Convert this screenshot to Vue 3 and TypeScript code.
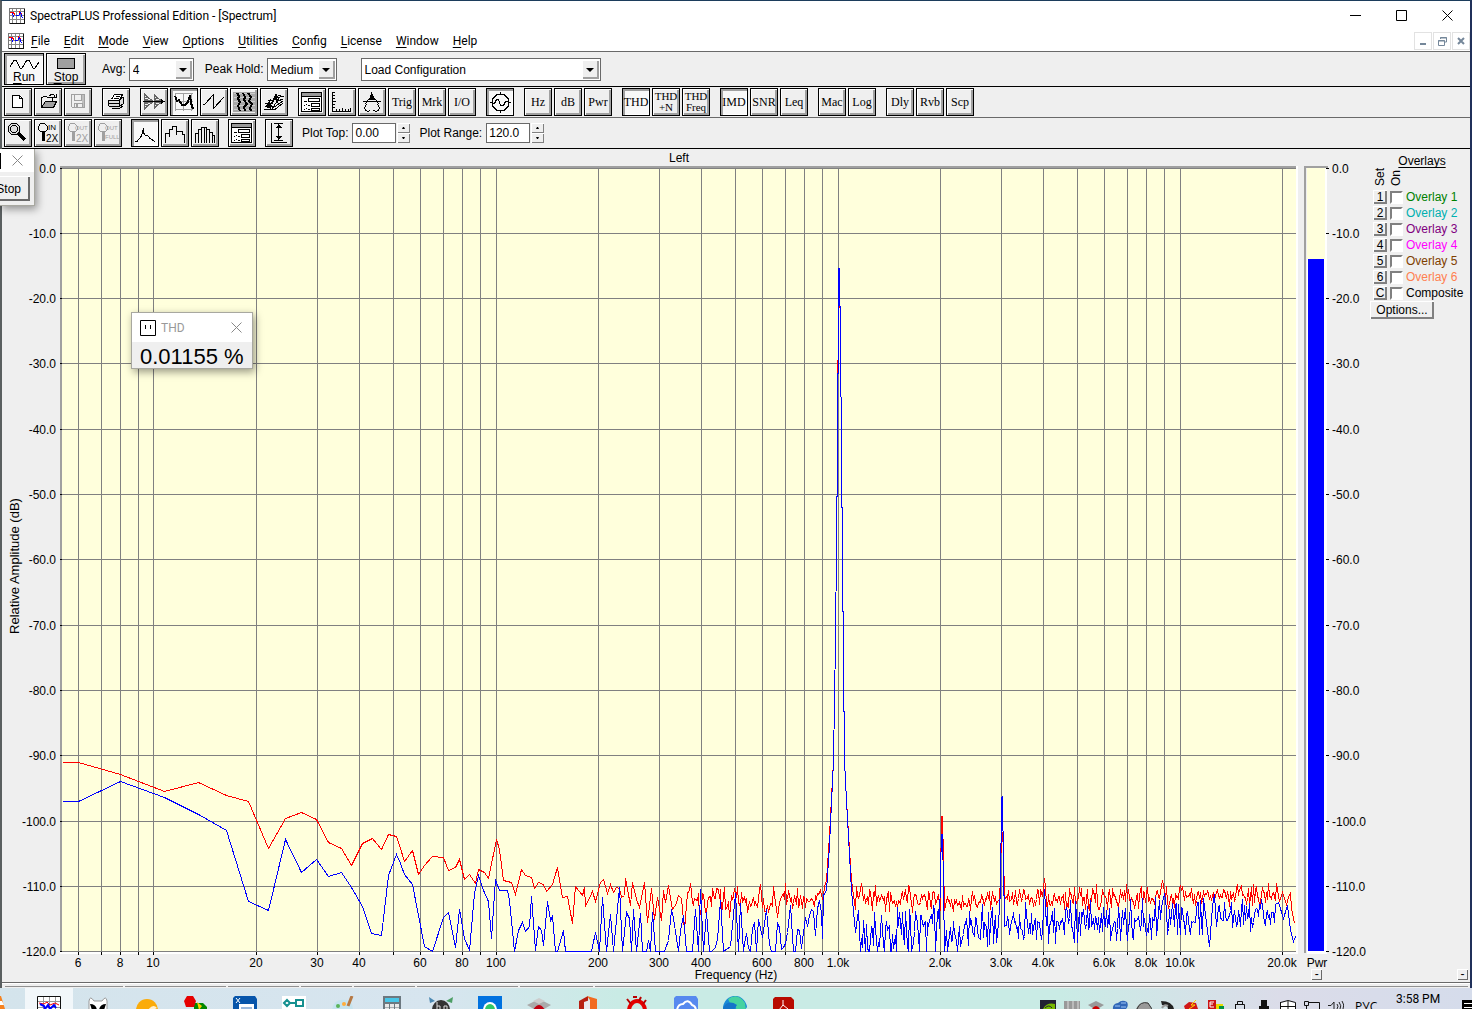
<script setup lang="ts">
import { ref } from 'vue'

interface Shape { d?: string; fill?: string; stroke?: string; w?: number; t?: string; x?: number; y?: number; size?: number }
interface Tool { name: string; lines?: string[]; icon?: string; on?: boolean }

const G = '#a0a0a0'
const s = (d: string, stroke = '#000', w = 1): Shape => ({ d, stroke, w })
const f = (d: string, fill = '#000'): Shape => ({ d, fill })
const t = (text: string, x: number, y: number, size: number, fill = '#000'): Shape => ({ t: text, x, y, size, fill })

const dialogShapes: Shape[] = [
  f('M2 3H24V23H2Z', '#fff'), s('M2.5 3.5H22.5V22.5H2.5Z'), f('M3 4H22V7H3Z', '#999'), s('M2.5 7.5H22.5'),
  s('M9.5 9.5H20.5V12.5H9.5ZM12.5 14.5H20.5V17.5H12.5ZM12.5 19.5H20.5V21H12.5Z'), s('M5 12.5H8M5 16.5H6M7 15.5H8M9 16.5H11M5 20.5H6M7 19.5H8M9 20.5H11'),
]

const icons: Record<string, Shape[]> = {
  new: [f('M7 6H15L18 9V19H7Z', '#fff'), s('M7.5 6.5H14.5L17.5 9.5V18.5H7.5ZM14.5 6.5V9.5H17.5')],
  open: [s('M6.5 17.5V8.5H7.5L8.5 7.5H11.5L12.5 8.5H17.5V11.5'), f('M6 18.5L10 12H22L18 18.5Z', G), s('M6.5 18.5L10.5 12.5H21.5L18.5 18.5ZM14.5 6.5L16.5 5.5H18.5L20.5 8.5M17 8.5H21.5M21.5 5V9')],
  save: [f('M17 6H20V19H17Z', '#c0c0c0'), s('M6.5 5.5H19.5V18.5H7.5L6.5 17.5ZM9.5 5.5V11.5H16.5V5.5M9.5 18.5V14.5H17.5V18.5', G), f('M11 15H13V18H11Z', G)],
  print: [f('M10 5H20L17 12H7Z', '#fff'), f('M5 11H16L20 8V15L16 19H8L5 17Z', '#ddd'), s('M8.5 10.5L11.5 5.5H19.5L16.5 11.5M12.5 7.5H17M11 9.5H16'), s('M5.5 11.5H16.5V17.5H6.5L5.5 16.5ZM16.5 11.5L19.5 8.5H20.5V14.5L16.5 17.5M5.5 14.5H16.5M8.5 19.5H16.5L20.5 16.5')],
  wave: [f('M3 4L13 12.5L3 21Z', '#666'), f('M13 5L22 12.5L13 20Z', '#666'), s('M4 7.5H5M4 9.5H7M4 15.5H7M4 17.5H5M7 10.5H9M7 14.5H9M14 8.5H15M14 16.5H15M15 10.5H18M15 14.5H18', '#efefef'), s('M2 12.5H24'), f('M20 10L23 12.5L20 15Z')],
  spectrum: [s('M4.5 4V22M12.5 4V22M20.5 4V22M4 4.5H22M4 12.5H22M4 20.5H22', G), s('M4 7L6 12L8 11L11 16H14L17 13L19 6L20 14L22 20', '#000', 2)],
  saw: [s('M2 15.5H3.5L12.5 5.5V19.5L22.5 8.5')],
  gram: [f('M2 3H24V23H2Z', '#a8a8a8'), s('M3 4H24M3 8H24M3 12H24M3 16H24M3 20H24', '#ccc'), s('M6 4L8 7L7 10L9 13L7 17L9 22M12 4L14 8L13 11L16 15L13 18L14 22M17 4L20 8L18 12L21 15L19 19L20 22', '#000', 2)],
  surface: [s('M3 20.5H14L22 14M4 17.5H14L22 12M4 14.5H11L15 8L17 12L22 10M7 11.5H12L15 5L16 9L23 7M14 8L20 6M6 17L10 10M8 19L14 8M11 20L18 9'), f('M4 18L8 12L11 17L10 20Z'), f('M14 10L16 5L17 15Z')],
  dialog: dialogShapes,
  ruler: [s('M3.5 3V22.5H22M3 3.5H6M4 6.5H6M4 9.5H6M3 12.5H7M4 15.5H6M4 18.5H6M7.5 20V22M10.5 20V22M13.5 19V22M16.5 20V22M19.5 20V22M21.5 19V22')],
  caliper: [s('M12.5 3V7L6 15M13.5 7L20 15M4 12.5H22M7.5 15C5 18 5 21 9 22.5L11.5 21.5M18.5 15C21 18 21 21 17 22.5L14.5 21.5'), f('M12 5H14L16 11H10Z')],
  gen: [s('M13.5 3V5M13.5 22V24M3 13.5H5M22 13.5H24M10 5.5H17L21.5 10V17L17 21.5H10L5.5 17V10ZM6 14.5H7.5L9.5 10.5H11.5L13.5 16.5H16.5L18.5 12.5H21')],
  zoom: [f('M5 3H12L15 6V11L12 14H6L3 11V6Z', '#ddd'), s('M6.5 3.5H11.5L14.5 6.5V11.5L11.5 14.5H6.5L3.5 11.5V6.5ZM7.5 5.5H10.5L12.5 7.5V10.5L10.5 12.5H7.5L5.5 10.5V7.5Z'), s('M13 13L20 20', '#000', 3)],
  in2: [s('M5.5 3.5H9.5L12.5 6.5V9.5L10.5 11.5H5.5L3.5 9.5V6.5Z'), s('M8 11V21', '#000', 3), t('IN', 13, 10, 8), t('2X', 11, 22, 10)],
  out2: [s('M5.5 3.5H9.5L12.5 6.5V9.5L10.5 11.5H5.5L3.5 9.5V6.5Z', G), s('M8 11V21', G, 3), t('OUT', 10, 10, 6, G), t('2X', 11, 22, 10, G)],
  outf: [s('M5.5 3.5H9.5L12.5 6.5V9.5L10.5 11.5H5.5L3.5 9.5V6.5Z', G), s('M8 11V21', G, 3), t('OUT', 10, 10, 6, G), t('FULL', 10, 19, 6, G)],
  line: [s('M3 21.5H5L9.5 16L11.5 8V13L13.5 15.5H15.5L18 18.5L23 21.5')],
  bars: [s('M3.5 23V13.5H7.5V9.5H10.5V6.5H14.5V11.5H20.5V14.5H22.5V23M7.5 13V17M14.5 11V15')],
  cols: [s('M3.5 23V13.5H6.5V9.5H9.5V7.5H14.5V9.5H17.5V12.5H20.5V15.5H22.5V23M6.5 12V23M9.5 9V23M12.5 7V23M14.5 9V23M17.5 12V23M20.5 15V23')],
  range: [s('M5.5 3V22.5H21M8 3.5H17M8 20.5H17M12.5 4V20M10.5 6.5H14.5M9.5 7.5H15.5M10.5 17.5H14.5M9.5 16.5H15.5M11.5 5.5H13.5M11.5 18.5H13.5')],
}

const word = (name: string, on = false): Tool => ({ name, lines: name.split(' '), on })
const pic = (name: string, icon: string, on = false): Tool => ({ name, icon, on })

const mainTools: Tool[][] = [
  [pic('New', 'new'), pic('Open', 'open'), pic('Save', 'save')],
  [pic('Print', 'print')],
  [pic('Time Series', 'wave'), pic('Spectrum', 'spectrum', true), pic('Phase', 'saw'), pic('Spectrogram', 'gram'), pic('Surface', 'surface')],
  [pic('Settings', 'dialog'), pic('Scaling', 'ruler'), pic('Calibration', 'caliper'), word('Trig'), word('Mrk'), word('I/O')],
  [pic('Signal Generator', 'gen', true)],
  [word('Hz'), word('dB'), word('Pwr')],
  [word('THD', true), word('THD +N'), word('THD Freq')],
  [word('IMD', true), word('SNR'), word('Leq')],
  [word('Mac'), word('Log')],
  [word('Dly'), word('Rvb'), word('Scp')],
]
const plotTools: Tool[][] = [
  [pic('Zoom', 'zoom'), pic('Zoom In 2X', 'in2'), pic('Zoom Out 2X', 'out2'), pic('Zoom Out Full', 'outf')],
  [pic('Line Plot', 'line', true), pic('Bar Plot', 'bars'), pic('Column Plot', 'cols')],
  [pic('Plot Options', 'dialog')],
  [pic('Autoscale', 'range')],
]

const menus = ['File', 'Edit', 'Mode', 'View', 'Options', 'Utilities', 'Config', 'License', 'Window', 'Help']
const avg = ref('4')
const hold = ref('Medium')
const config = ref('Load Configuration')
const plotTop = ref('0.00')
const plotRange = ref('120.0')

const overlays = [
  { key: '1', label: 'Overlay 1', color: '#008000' },
  { key: '2', label: 'Overlay 2', color: '#00b0b0' },
  { key: '3', label: 'Overlay 3', color: '#800080' },
  { key: '4', label: 'Overlay 4', color: '#ff00ff' },
  { key: '5', label: 'Overlay 5', color: '#804000' },
  { key: '6', label: 'Overlay 6', color: '#ff8050' },
  { key: 'C', label: 'Composite', color: '#000000' },
]

// Frequency grid: position on the axis and the printed label, if any.
const freqGrid: [number, string][] = [
  [78, '6'], [101, ''], [120, '8'], [138, ''], [153, '10'], [256, '20'], [317, '30'], [359, '40'], [393, ''], [420, '60'],
  [443, ''], [462, '80'], [480, ''], [496, '100'], [598, '200'], [659, '300'], [701, '400'], [735, ''], [762, '600'], [785, ''],
  [804, '800'], [822, ''], [838, '1.0k'], [940, '2.0k'], [1001, '3.0k'], [1043, '4.0k'], [1077, ''], [1104, '6.0k'], [1127, ''],
  [1146, '8.0k'], [1164, ''], [1180, '10.0k'], [1282, '20.0k'],
]
const dbGrid = [168, 233, 298, 363, 429, 494, 559, 625, 690, 755, 821, 886, 951].map((y, i) => ({
  y,
  label: i === 0 ? '0.0' : `-${i * 10}.0`,
}))

let seed = 20
function rnd(): number {
  seed = (seed * 1103515245 + 12345) % 2147483648
  return seed / 2147483648
}
type Pt = [number, number]
// Noise floor between two x positions around a sloping centre level.
function noise(x0: number, x1: number, c0: number, c1: number, amp: number, spike: number, step: number): Pt[] {
  const out: Pt[] = []
  for (let x = x0; x < x1; x += step) {
    const c = c0 + ((c1 - c0) * (x - x0)) / (x1 - x0)
    let y = c + (rnd() + rnd() - 1) * amp * 1.4
    const r = rnd()
    if (r < 0.08) y = c - spike * (0.6 + rnd() * 0.4)
    else if (r > 0.93) y = c + spike * 0.8
    out.push([Math.round(x), Math.min(951, Math.round(y))])
  }
  return out
}
const toPath = (p: Pt[]): string => 'M' + p.map(([x, y]) => `${x + 0.5} ${y + 0.5}`).join('L')

const redPath = toPath([
  [62, 762], [78, 762], [120, 774], [164, 791], [198, 782], [226, 795], [248, 801], [268, 848], [285, 818], [301, 812], [316, 819],
  [328, 842], [341, 848], [351, 865], [362, 843], [372, 838], [381, 849], [388, 834], [396, 836], [400, 848], [404, 861], [412, 850],
  [418, 874], [424, 865], [432, 856], [443, 857], [448, 870], [455, 867], [459, 859], [464, 879], [469, 874], [475, 883], [478, 869],
  [484, 872], [488, 878], [496, 839], [499, 849], [503, 880], [511, 882], [515, 894], [521, 869], [525, 875], [531, 877], [534, 888],
  [538, 882], [543, 884], [546, 891], [552, 884], [557, 867], [562, 897], [567, 896], [572, 923], [575, 886], [582, 895], [584, 887],
  [585, 906], [592, 891], [595, 901], [600, 882], [603, 879], [607, 893], [610, 884], [613, 892], [616, 887], [619, 888], [621, 897],
  [624, 895], [625, 878], [630, 905], [632, 882], [636, 899], [639, 907], [644, 882], [647, 922], [651, 888], [654, 919], [657, 897],
  [661, 920], [663, 890], [665, 902], [668, 885], [672, 909], [676, 903], [678, 895], [681, 898], [684, 930], [687, 892],
  ...noise(689, 786, 901, 901, 11, 20, 1.3), ...noise(786, 824, 899, 895, 8, 13, 1.2),
  [824, 886], [826, 880], [829, 835], [833, 760], [835, 640], [837, 450], [838, 275], [839, 272], [840, 340], [842, 560], [844, 760],
  [846, 800], [849, 850], [851, 880], [853, 895],
  ...noise(855, 940, 897, 902, 9, 15, 1.1), [940, 880], [941, 816], [942, 816], [943, 860], [944, 910],
  ...noise(946, 1000, 902, 899, 7, 12, 1), [1000, 875], [1001, 832], [1002, 832], [1003, 850], [1004, 900],
  ...noise(1005, 1043, 899, 897, 7, 9, 1), [1043, 888], [1044, 878], [1045, 886],
  ...noise(1046, 1160, 898, 897, 8, 14, 1), [1162, 880], [1164, 891], ...noise(1165, 1280, 897, 894, 7, 13, 1),
  [1282, 892], [1286, 904], [1288, 897], [1290, 892], [1291, 908], [1294, 923],
])
const bluePath = toPath([
  [62, 801], [78, 801], [120, 781], [164, 797], [198, 814], [226, 830], [248, 901], [268, 910], [285, 839], [301, 872], [316, 859],
  [328, 876], [341, 872], [351, 887], [362, 906], [371, 933], [381, 935], [388, 875], [396, 854], [400, 863], [404, 874], [412, 884],
  [418, 915], [424, 946], [432, 951], [443, 917], [448, 912], [455, 947], [459, 909], [464, 938], [469, 950], [474, 893], [478, 875],
  [483, 890], [488, 901], [491, 938], [495, 879], [499, 890], [507, 890], [509, 900], [514, 951], [518, 930], [522, 922], [525, 931],
  [529, 926], [531, 896], [535, 950], [538, 926], [541, 930], [543, 945], [547, 901], [550, 920], [552, 916], [555, 951], [557, 951],
  [563, 930], [565, 951], [591, 951], [595, 932], [599, 951], [602, 897], [606, 951], [610, 914], [613, 951], [619, 887], [622, 951],
  [626, 912], [629, 918], [631, 951], [633, 909], [636, 951], [640, 913], [642, 951], [646, 951], [648, 940], [650, 951], [652, 912],
  [655, 951], [664, 951], [668, 940], [671, 909], [673, 918], [678, 951], [680, 930], [683, 915], [686, 951], [692, 951], [695, 909],
  [698, 951], [700, 889], [703, 951], [706, 912], [709, 951],
  ...noise(711, 718, 945, 945, 10, 8, 2), [720, 900], [723, 951], [730, 946], [735, 893], [738, 951], [740, 903], [743, 951],
  ...noise(744, 764, 945, 935, 24, 20, 2), [766, 909], [769, 944], ...noise(771, 789, 945, 945, 20, 20, 2), [790, 905], [793, 951],
  ...noise(795, 822, 938, 916, 18, 18, 2), [822, 938],
  [823, 895], [826, 890], [829, 845], [833, 760], [835, 640], [837, 450], [838, 300], [838, 268], [839, 268], [840, 340], [842, 560],
  [844, 760], [846, 800], [849, 855], [851, 890], [855, 932], [858, 910], [860, 951],
  ...noise(861, 940, 938, 930, 23, 28, 1.2), [940, 870], [941, 834], [942, 834], [943, 885], [944, 951],
  ...noise(946, 1000, 938, 922, 17, 24, 1.2), [1000, 890], [1001, 798], [1002, 796], [1003, 862], [1004, 926],
  ...noise(1005, 1043, 922, 923, 16, 20, 1.1), [1044, 889], [1046, 925],
  ...noise(1047, 1162, 924, 919, 14, 24, 1), [1164, 893], ...noise(1166, 1204, 918, 918, 13, 20, 1), [1209, 946],
  [1212, 906], [1214, 894], ...noise(1216, 1276, 917, 916, 11, 18, 1), [1278, 902], [1283, 918], [1287, 905], [1290, 930], [1293, 941], [1295, 936],
])

const taskIcons: { name: string; active?: boolean; shapes: Shape[] }[] = [
  { name: 'SpectraPLUS', active: true, shapes: [f('M0 0H24V24H0Z', '#fff'), s('M1 5.5H23M1 11.5H23M6.5 0V20M12.5 0V20M18.5 0V20', '#999'), s('M0.5 24V0.5H23.5V24', '#111'), s('M2 7L7 8L10 6L13 9L18 7L22 9', '#f00', 1), s('M3 8L7 10L8 13L11 9L13 13L17 9L19 12', '#00f', 2)] },
  { name: 'foobar2000', shapes: [f('M3 14V5Q4 -1 8 5H16Q20 -1 21 5V14Z', '#fff'), s('M3 14V5Q4 -1 8 5H16Q20 -1 21 5V14', '#999'), f('M4 8Q10 8 11 14H6Z'), f('M20 8Q14 8 13 14H18Z')] },
  { name: 'Browser', shapes: [f('M1 14A11 11 0 0 1 23 14L20 16L1 20Z', '#fbab09'), f('M13 14Q18 7 22 12L14 16Z', '#fff0d0')] },
  { name: 'Recorder', shapes: [f('M10 7H19L23 11V15H10Z', '#080'), f('M13 6L18 10L15 14Z', '#fc0'), f('M3 0H9L12 5L10 11H2L0 5Z', '#e60000')] },
  { name: 'Calculator', shapes: [f('M2 0H22L24 3V24H0V2Z', '#0755aa'), s('M3 2L7 7M7 2L3 7', '#fff'), f('M6 8H21V14H6Z', '#fff'), f('M8 11H19V14H8Z', '#9bb9dd')] },
  { name: 'Diagram', shapes: [f('M0 0H24V20H0Z', '#fff'), s('M2 7L5 4L8 7L5 10ZM8 7H14V4H21V10H14V7', '#159090', 2)] },
  { name: 'Paint', shapes: [f('M1 14Q3 2 15 4Q22 5 22 14Z', '#c5e3ee'), f('M5 10A2 2 0 1 1 9 10A2 2 0 1 1 5 10Z', '#5ab45a'), f('M11 8A2 2 0 1 1 15 8A2 2 0 1 1 11 8Z', '#ffad3b'), s('M17 10L21 0', '#b67944', 3)] },
  { name: 'Calc', shapes: [f('M3 0H21V20H3Z', '#6c7880'), f('M5 2H19V6H5Z', '#48c6e8'), s('M5 9.5H9M10 9.5H14M15 9.5H19M5 13H9M10 13H14M15 13H19', '#e8e8e8', 3)] },
  { name: 'HP', shapes: [f('M0 1L6 5L1 7Z', '#4b88b2'), f('M24 1L17 5L23 7Z', '#4c9e65'), f('M3 14A9 10 0 0 1 21 14Z', '#333'), s('M8 6V14M8 10H11V14M15 16V10H18V14', '#ddd')] },
  { name: 'WhatsApp', shapes: [f('M0 0H24V24H0Z', '#0072e0'), f('M5 14A7 8 0 0 1 19 14Z', '#fff'), f('M7 14A5 6 0 0 1 17 14Z', '#30c868')] },
  { name: 'Package', shapes: [f('M0 9L12 3L24 9L12 16Z', '#aaa'), f('M6 5L12 2L18 5L12 8Z', '#ccc'), f('M6 14Q12 4 18 14Z', '#c00010')] },
  { name: 'Office', shapes: [f('M3 5L12 0V20H3Z', '#b71e12'), f('M11 0L21 3V20H14V4Z', '#f26b20'), f('M8 6L14 4V20H8Z', '#e9e6ed')] },
  { name: 'Sync', shapes: [s('M4 15A8 10 0 0 1 20 15', '#e30000', 4), s('M2 3L6 8M8 1H12M16 1L14 5M21 4L18 8', '#b80000', 2)] },
  { name: 'Cloud', shapes: [f('M2 0H22L24 3V24H0V2Z', '#5689ef'), s('M3 14Q4 8 9 8Q14 2 18 9Q22 10 22 15', '#fff', 2)] },
  { name: 'Edge', shapes: [f('M0 15A12 13 0 0 1 24 11Q22 16 13 14Z', '#198bd7'), f('M5 3Q15 -4 22 7L23 14L13 14Q14 8 7 7Z', '#46d2a0'), f('M0 12Q5 3 14 9L10 15H0Z', '#1574c9')] },
  { name: 'Reader', shapes: [f('M3 1H19L22 4V24H1V3Z', '#b80b00'), s('M11 4V9L7 14M11 9L16 13', '#fff', 1)] },
]
const trayIcons: { name: string; shapes: Shape[] }[] = [
  { name: 'Graphics', shapes: [f('M0 0H16V10H0Z', '#223'), f('M3 9Q7 2 15 4V10H3Z', '#76b900'), s('M5 8Q9 4 12 8', '#223')] },
  { name: 'Storage', shapes: [f('M0 1H16V10H0Z', '#999'), s('M4 1V10M9 1V10M14 1V10', '#ddd')] },
  { name: 'Package', shapes: [f('M0 5L8 1L16 5L8 10Z', '#999'), f('M4 9Q8 3 12 9Z', '#c00')] },
  { name: 'Network', shapes: [f('M1 9A5 5 0 0 1 6 3Q10 -1 15 2Q17 6 14 9Z', '#3268b8'), s('M3 6H8M9 3H14M9 7H14', '#9bc4f5')] },
  { name: 'Stone', shapes: [f('M0 9Q4 1 12 3L16 9Z', '#999'), s('M1 9Q4 1 12 3L16 9', '#333')] },
  { name: 'Sound', shapes: [f('M1 1Q12 1 14 9H8Q8 5 2 5Z', '#222'), s('M2 8Q4 4 8 6', '#999', 2)] },
  { name: 'Firewall', shapes: [f('M0 6L5 2L12 3L14 9H1Z', '#d01818'), s('M12 0L7 5H11L5 9', '#ffd500', 1)] },
  { name: 'Monitor', shapes: [f('M0 0H8V9H0Z', '#cb1414'), s('M6 2H2V7H6M2 4H5', '#fff'), f('M8 4H15V9H8Z', '#e8dc00'), f('M11 6H16V9H11Z', '#009440')] },
  { name: 'USB', shapes: [s('M5.5 4V1.5H10.5V4M3.5 4.5H12.5V10M3.5 4V10', '#111')] },
  { name: 'Drive', shapes: [f('M5 0H11V6H13V10H3V6H5Z', '#111')] },
  { name: 'Defender', shapes: [f('M1 3L8 1L15 3V10H1Z', '#fff'), s('M0.5 2.5L8 0.5L15.5 2.5V10M0.5 2V10M8 1V10M1 6.5H15', '#111')] },
  { name: 'Ethernet', shapes: [s('M5 2.5H15.5V10M0.5 1.5H4.5V5.5H0.5ZM2.5 6V10', '#111')] },
  { name: 'Volume', shapes: [s('M0 5.5H3L6 2V10M9 4Q11 6 9 9M11 2Q14 6 12 9M14 1Q17 5 15 9', '#222')] },
]
const statusCells = [118, 101, 71, 51, 61, 101, 73]
const appIcon: Shape[] = [f('M0 0H16V16H0Z', '#fff'), s('M0 3.5H16M0 7.5H16M0 11.5H16M3.5 0V16M7.5 0V16M11.5 0V16', '#888'), s('M15.5 0V15.5H0', '#111'), s('M0.5 16V0.5H16', '#777'), s('M1 4.5H4L6 6.5M10 3.5L13 6.5', '#f00', 1), s('M3 5.5L5 8.5M6.5 7.5H9.5L11.5 4.5L13.5 10', '#00f', 1)]
</script>

<template>
  <div class="desktop">
    <main class="window">
      <header class="titlebar">
        <svg class="app-icon" viewBox="0 0 16 16"><path v-for="(p, i) in appIcon" :key="i" :d="p.d" :fill="p.fill ?? 'none'" :stroke="p.stroke" :stroke-width="p.w" /></svg>
        <h1>SpectraPLUS Professional Edition - [Spectrum]</h1>
        <div class="captions">
          <button aria-label="Minimize"><svg viewBox="0 0 11 11"><path d="M0 5.5H11" /></svg></button>
          <button aria-label="Maximize"><svg viewBox="0 0 11 11"><path d="M.5 .5H10.5V10.5H.5Z" /></svg></button>
          <button aria-label="Close"><svg viewBox="0 0 11 11"><path d="M.5 .5L10.5 10.5M10.5 .5L.5 10.5" /></svg></button>
        </div>
      </header>
      <nav class="menubar">
        <svg class="app-icon" viewBox="0 0 16 16"><path v-for="(p, i) in appIcon" :key="i" :d="p.d" :fill="p.fill ?? 'none'" :stroke="p.stroke" :stroke-width="p.w" /></svg>
        <button v-for="m in menus" :key="m" class="menu"><u>{{ m[0] }}</u>{{ m.slice(1) }}</button>
        <div class="mdi">
          <button aria-label="Minimize document"><svg viewBox="0 0 10 10"><path d="M2 8H8" stroke-width="2" /></svg></button>
          <button aria-label="Restore document"><svg viewBox="0 0 10 10"><path d="M3.5 3V1.5H9.5V6H8M3 2H10M1.5 4.5H7.5V9.5H1.5ZM1 5H8" /></svg></button>
          <button aria-label="Close document"><svg viewBox="0 0 10 10"><path d="M2 2L8 8M8 2L2 8" stroke-width="2" /></svg></button>
        </div>
      </nav>

      <section class="bar run-bar">
        <div class="runs">
          <button class="tool big on"><svg viewBox="0 0 30 12"><path d="M1 9L5 2H7L11 10H13L18 2H20L24 10H26L30 4" fill="none" stroke="#000" /></svg><span><u>R</u>un</span></button>
          <button class="tool big"><svg viewBox="0 0 30 12"><path d="M6.5 .5H23.5V10.5H6.5Z" fill="#a0a0a0" stroke="#000" /></svg><span><u>S</u>top</span></button>
        </div>
        <label for="avg">Avg:</label>
        <span class="combo avg"><select id="avg" v-model="avg"><option>4</option><option>8</option></select><i><svg viewBox="0 0 8 4"><path d="M0 0H8L4 4Z" /></svg></i></span>
        <label for="hold" class="hold-label">Peak Hold:</label>
        <span class="combo hold"><select id="hold" v-model="hold"><option>Medium</option><option>Fast</option></select><i><svg viewBox="0 0 8 4"><path d="M0 0H8L4 4Z" /></svg></i></span>
        <span class="combo config"><select v-model="config" aria-label="Configuration"><option>Load Configuration</option></select><i><svg viewBox="0 0 8 4"><path d="M0 0H8L4 4Z" /></svg></i></span>
      </section>

      <section class="bar main-bar">
        <div v-for="(g, gi) in mainTools" :key="gi" class="group">
          <button v-for="b in g" :key="b.name" class="tool" :class="{ on: b.on }" :aria-label="b.name">
            <svg v-if="b.icon" viewBox="0 0 26 26" class="glyph">
              <path v-for="(p, i) in icons[b.icon]" :key="i" :d="p.d" :fill="p.fill ?? 'none'" :stroke="p.stroke" :stroke-width="p.w" />
            </svg>
            <span v-else :class="{ two: b.lines!.length > 1 }"><span v-for="l in b.lines" :key="l">{{ l }}</span></span>
          </button>
        </div>
      </section>

      <section class="bar plot-bar">
        <div v-for="(g, gi) in plotTools" :key="gi" class="group">
          <button v-for="b in g" :key="b.name" class="tool" :class="{ on: b.on }" :aria-label="b.name">
            <svg viewBox="0 0 26 26" class="glyph">
              <template v-for="(p, i) in icons[b.icon!]" :key="i">
                <text v-if="p.t" :x="p.x" :y="p.y" :font-size="p.size" :fill="p.fill">{{ p.t }}</text>
                <path v-else :d="p.d" :fill="p.fill ?? 'none'" :stroke="p.stroke" :stroke-width="p.w" />
              </template>
            </svg>
          </button>
        </div>
        <label for="ptop">Plot Top:</label>
        <input id="ptop" v-model="plotTop" type="text" />
        <span class="spin"><button aria-label="Raise plot top"><svg viewBox="0 0 3 2"><path d="M1 0H2L3 2H0Z" /></svg></button><button aria-label="Lower plot top"><svg viewBox="0 0 3 2"><path d="M0 0H3L2 2H1Z" /></svg></button></span>
        <label for="prange" class="range-label">Plot Range:</label>
        <input id="prange" v-model="plotRange" type="text" />
        <span class="spin"><button aria-label="Raise plot range"><svg viewBox="0 0 3 2"><path d="M1 0H2L3 2H0Z" /></svg></button><button aria-label="Lower plot range"><svg viewBox="0 0 3 2"><path d="M0 0H3L2 2H1Z" /></svg></button></span>
      </section>

      <div class="content">
        <div class="chart">
          <svg class="plot" viewBox="2 149 1368 833" role="img" aria-label="Left channel spectrum">
            <path d="M60 166H1296V168H60ZM60 166H62V953H60Z" fill="#a0a0a0" />
            <path d="M1296 166H1298V954H60V952H1296Z" fill="#fff" />
            <rect x="62" y="168" width="1234" height="784" fill="#ffffdc" />
            <g shape-rendering="crispEdges">
              <path v-for="[x] in freqGrid" :key="x" :d="`M${x + 0.5} 168V952`" stroke="#808080" />
              <path v-for="[x] in freqGrid" :key="-x" :d="`M${x + 0.5} 952V955`" stroke="#000" />
              <path v-for="r in dbGrid" :key="r.y" :d="`M62 ${r.y + 0.5}H1296`" stroke="#808080" />
              <path :d="redPath" class="trace" stroke="#f00" />
              <path :d="bluePath" class="trace" stroke="#00f" />
            </g>
            <path d="M1304 166H1328V168H1306V953H1304Z" fill="#a0a0a0" />
            <rect x="1307" y="168" width="20" height="786" fill="#fff" />
            <rect x="1307" y="168" width="18" height="91" fill="#ffffdc" />
            <rect x="1308" y="259" width="16" height="692" fill="#00f" />
            <g v-for="r in dbGrid" :key="r.label">
              <path :d="`M60 ${r.y + 0.5}H62M1326 ${r.y + 0.5}H1329`" stroke="#000" />
              <text x="56" :y="r.y + 5" text-anchor="end">{{ r.label }}</text>
              <text x="1332" :y="r.y + 5">{{ r.label }}</text>
            </g>
            <text v-for="[x, l] in freqGrid" :key="x" :x="x" y="967" text-anchor="middle">{{ l }}</text>
            <text x="679" y="162" text-anchor="middle">Left</text>
            <text x="736" y="979" text-anchor="middle">Frequency (Hz)</text>
            <text x="1317" y="967" text-anchor="middle">Pwr</text>
            <text class="axis" transform="translate(19 566) rotate(-90)" text-anchor="middle">Relative Amplitude (dB)</text>
          </svg>
          <button class="mini meter-mini" aria-label="Hide meter">-</button>
        </div>

        <aside class="overlays">
          <h2>Overlays</h2>
          <div class="heads"><span>Set</span><span>On</span></div>
          <div v-for="o in overlays" :key="o.key" class="overlay">
            <button :aria-label="`Set ${o.label}`">{{ o.key }}</button>
            <input :id="`ov${o.key}`" type="checkbox" />
            <label :for="`ov${o.key}`" :style="{ color: o.color }">{{ o.label }}</label>
          </div>
          <button class="options">Options...</button>
          <button class="mini panel-mini" aria-label="Hide overlays">-</button>
        </aside>
      </div>

      <footer class="status"><span v-for="(w, i) in statusCells" :key="i" :style="{ width: w + 'px' }"></span><span class="rest"></span></footer>
    </main>

    <section class="float run-float">
      <div class="float-head"><b></b><button aria-label="Close"><svg viewBox="0 0 11 11"><path d="M.5 .5L10.5 10.5M10.5 .5L.5 10.5" /></svg></button></div>
      <div class="float-body"><button class="stop">Stop</button></div>
    </section>

    <section class="float thd">
      <div class="float-head">
        <svg class="thd-icon" viewBox="0 0 16 16"><path d="M.5 .5H15.5V15.5H.5Z" fill="#fff" stroke="#000" /><path d="M5.5 5V9M10.5 5V9" stroke="#000" /></svg>
        <span>THD</span>
        <button aria-label="Close THD"><svg viewBox="0 0 11 11"><path d="M.5 .5L10.5 10.5M10.5 .5L.5 10.5" /></svg></button>
      </div>
      <output>0.01155 %</output>
    </section>

    <footer class="taskbar">
      <svg class="vlc" viewBox="0 0 5 13"><path d="M0 0H1L5 13H0Z" fill="#f58220" /><path d="M0 5H2L4 9H0Z" fill="#fff" /></svg>
      <button v-for="a in taskIcons" :key="a.name" class="task" :class="{ active: a.active }" :aria-label="a.name">
        <svg viewBox="0 0 24 24"><path v-for="(p, i) in a.shapes" :key="i" :d="p.d" :fill="p.fill ?? 'none'" :stroke="p.stroke" :stroke-width="p.w" /></svg>
      </button>
      <div class="tray">
        <svg v-for="a in trayIcons" :key="a.name" viewBox="0 0 16 10"><path v-for="(p, i) in a.shapes" :key="i" :d="p.d" :fill="p.fill ?? 'none'" :stroke="p.stroke" :stroke-width="p.w" /></svg>
        <span class="lang">РУС</span>
        <time>3:58 PM</time>
        <svg class="note" viewBox="0 0 10 10"><path d="M0 0H10V10H0Z" /><path d="M2 3.5H10M2 7.5H10" stroke="#fff" /></svg>
      </div>
    </footer>
  </div>
</template>

<style>
body { margin: 0; }
</style>

<style scoped>
* { box-sizing: border-box; }
.desktop { position: relative; display: flex; flex-direction: column; height: 100vh; overflow: hidden; font: 12px/16px "Liberation Sans", Arial, sans-serif; color: #000; }
button { font: inherit; color: inherit; padding: 0; margin: 0; border: 0; background: none; border-radius: 0; }
svg { display: block; }
.window { display: flex; flex-direction: column; background: #efefef; border-left: 2px solid #5a5f60; border-right: 2px solid #20305a; border-top: 1px solid #1c3d5c; flex: none; }
.titlebar { display: flex; align-items: center; height: 30px; background: #fff; padding-left: 7px; }
.app-icon { width: 16px; height: 16px; flex: none; shape-rendering: crispEdges; }
h1 { margin: 0 0 0 5px; font: 12px/16px Roboto, "Noto Sans", sans-serif; flex: 1; }
.captions { display: flex; height: 28px; align-self: flex-start; }
.captions button { width: 46px; height: 28px; display: grid; place-items: center; }
.captions svg { width: 11px; height: 11px; fill: none; stroke: #000; }
.menubar { display: flex; align-items: center; height: 20px; background: #fff; padding-left: 6px; font: 12px/16px Roboto, "Noto Sans", sans-serif; }
.menu { padding: 0 7px; }
u { text-underline-offset: 2px; }
.mdi { display: flex; gap: 1px; margin-left: auto; }
.mdi button { width: 18px; height: 18px; border: 1px solid #e2e2e2; display: grid; place-items: center; }
.mdi svg { width: 10px; height: 10px; fill: none; stroke: #75879a; }
.bar { display: flex; background: #efefef; }
.run-bar { height: 35px; border-top: 1px solid #696969; padding: 1px 0 0 2px; align-items: flex-start; }
.runs { display: flex; gap: 2px; margin-right: 16px; }
.run-bar label { line-height: 32px; margin-right: 3px; }
.run-bar .hold-label { margin-left: 11px; }
.tool { width: 28px; height: 28px; border: 1px solid #000; background: #efefef; box-shadow: inset 1px 1px #fff, inset -2px -2px #a0a0a0; flex: none; font: 12px/16px "Liberation Serif", serif; display: flex; align-items: center; justify-content: center; overflow: hidden; }
.tool.on { background: #f8f8f8; box-shadow: inset 2px 2px #a0a0a0, inset -1px -1px #fff; }
.tool > span { display: flex; flex-direction: column; align-items: center; }
.tool > .two { font-size: 11px; line-height: 11px; }
.big { width: 40px; height: 32px; flex-direction: column; font: 12px/13px "Liberation Sans", Arial, sans-serif; justify-content: flex-start; padding-top: 4px; }
.tool.big > span { display: block; padding-top: 1px; }
.big svg { width: 30px; height: 12px; flex: none; shape-rendering: crispEdges; }
.glyph { width: 26px; height: 26px; flex: none; shape-rendering: crispEdges; font-family: "Liberation Sans", Arial, sans-serif; }
.combo { position: relative; height: 23px; margin-top: 5px; flex: none; }
.combo select { appearance: none; width: 100%; height: 23px; border: 1px solid #696969; border-radius: 0; background: #fff; font: inherit; color: #000; padding: 0 20px 0 3px; }
.combo i { position: absolute; right: 2px; top: 2px; width: 17px; height: 19px; background: #efefef; box-shadow: inset 1px 1px #fff, inset -2px -2px #a0a0a0; display: grid; place-items: center; pointer-events: none; }
.combo i svg { width: 8px; height: 4px; }
.avg { width: 65px; }
.hold { width: 70px; }
.config { width: 240px; margin-left: 24px; }
.main-bar { height: 31px; border-top: 1px solid #000; padding: 1px 0 0 2px; gap: 10px; }
.group { display: flex; gap: 2px; }
.plot-bar { height: 32px; border-top: 1px solid #696969; border-bottom: 1px solid #000; padding: 1px 0 0 2px; }
.plot-bar .group { margin-right: 9px; }
.plot-bar label { line-height: 28px; margin-right: 4px; }
.plot-bar .range-label { margin-left: 9px; }
.plot-bar input { width: 44px; height: 20px; margin: 4px 1px 0 0; border: 1px solid #696969; padding: 0 2px; font: inherit; background: #fff; border-radius: 0; }
.spin { width: 13px; margin-top: 4px; height: 20px; display: flex; flex-direction: column; }
.spin button { height: 10px; display: grid; place-items: center; box-shadow: inset 1px 1px #fff, inset -1px -1px #808080; }
.spin svg { width: 3px; height: 2px; }
.content { display: flex; align-items: stretch; }
.chart { position: relative; flex: 1; min-width: 0; }
.plot { width: 100%; height: auto; }
.plot text { font-size: 12px; }
.plot .axis { font-size: 13px; }
.trace { fill: none; stroke-width: 1; }
.mini { width: 11px; height: 11px; line-height: 9px; background: #efefef; box-shadow: inset 1px 1px #fff, inset -1px -1px #696969; }
.meter-mini { position: absolute; bottom: 2px; left: 95.7%; }
.overlays { width: 100px; flex: none; display: flex; flex-direction: column; padding-top: 4px; }
h2 { font: inherit; text-decoration: underline; text-underline-offset: 2px; margin: 0; padding-left: 4px; text-align: center; }
.heads { display: flex; height: 20px; align-items: flex-end; padding: 0 0 3px 2px; }
.heads span { writing-mode: vertical-rl; transform: rotate(180deg); width: 16px; line-height: 16px; }
.overlay { display: flex; align-items: center; height: 16px; padding-left: 3px; }
.overlay button { width: 14px; height: 14px; line-height: 13px; background: #efefef; box-shadow: inset 1px 1px #fff, inset -2px -2px #808080; }
.overlay input { appearance: none; width: 13px; height: 13px; margin: 0 3px; background: #fff; border: 2px solid; border-color: #808080 #fff #fff #808080; }
.overlay label { white-space: nowrap; }
.options { width: 64px; height: 18px; background: #efefef; box-shadow: inset 1px 1px #fff, inset -2px -2px #808080; }
.panel-mini { margin: auto 2px 2px auto; }
.status { height: 6px; border-top: 1px solid #696969; box-shadow: inset 0 1px #fff; display: flex; gap: 2px; padding: 3px 2px 0 3px; }
.status span { border-top: 1px solid #909090; flex: none; height: 2px; }
.status .rest { flex: 1; }
.float { position: absolute; background: #efefef; border: 1px solid #a8a8a0; box-shadow: 2px 3px 8px #0006; }
.float-head { display: flex; align-items: center; background: #fff; color: #999; }
.float-head button svg { width: 11px; height: 11px; stroke: #888; fill: none; }
.thd { left: 131px; top: 312px; width: 122px; height: 57px; }
.thd .float-head { height: 29px; padding: 0 10px 0 8px; font-family: Roboto, "Noto Sans", sans-serif; }
.thd-icon { width: 16px; height: 16px; margin-right: 5px; }
.thd .float-head button { margin-left: auto; }
.thd output { display: block; padding-left: 8px; font-size: 22px; line-height: 30px; white-space: nowrap; }
.run-float { left: 0; top: 149px; width: 35px; height: 57px; border-left: 0; border-top: 0; }
.run-float .float-head { height: 23px; justify-content: space-between; padding-right: 11px; }
.run-float b { width: 1px; height: 16px; background: #000; }
.float-body { display: flex; justify-content: flex-end; padding: 4px 4px 0 0; overflow: hidden; }
.stop { width: 60px; flex: none; height: 25px; text-align: right; padding-right: 9px; box-shadow: inset 0 1px #fff, inset -2px -2px #696969; }
.taskbar { flex: 1; min-height: 21px; overflow: hidden; display: flex; background: linear-gradient(90deg, #d4e4ec 0, #d7e5ef 30%, #c9ebe5 42%, #c9ebe5 72%, #dbdce9 87%, #d5dceb); }
.vlc { width: 5px; height: 13px; margin: 8px 20px 0 0; flex: none; }
.task { width: 48px; height: 40px; margin-right: 1px; flex: none; padding: 8px 12px 0; display: flex; }
.task.active { background: #f2f7fa; }
.task svg { width: 24px; height: 24px; }
.tray { margin-left: auto; display: flex; flex: none; height: 24px; }
.tray > svg { width: 16px; height: 10px; margin: 12px 8px 0 0; }
.lang { margin: 11px 0 0 3px; width: 41px; font: 12px/16px "Open Sans", "Noto Sans", sans-serif; }
.tray time { font: 12px/16px Roboto, "Noto Sans", sans-serif; margin-top: 3px; width: 66px; white-space: nowrap; }
.tray > .note { width: 10px; margin-right: 0; }
</style>
